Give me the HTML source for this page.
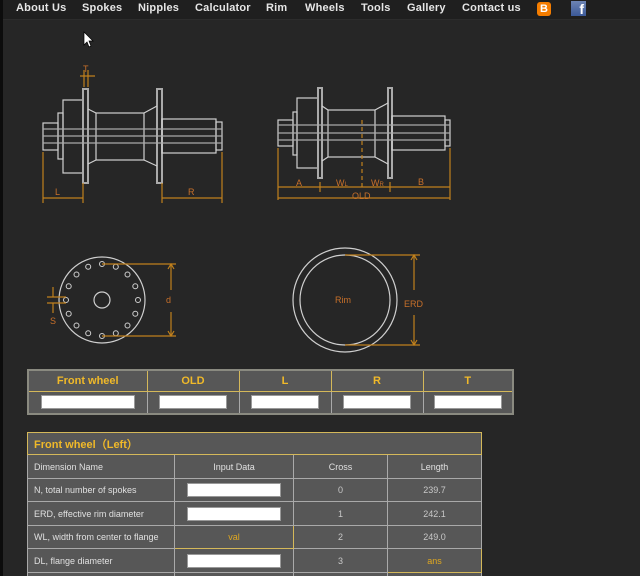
<!DOCTYPE html>
<html><head><meta charset="utf-8"><style>
*{margin:0;padding:0;box-sizing:border-box}
html,body{width:640px;height:576px;overflow:hidden}
body{background:#262626;position:relative;font-family:"Liberation Sans",sans-serif}
#nav{position:absolute;left:0;top:0;width:640px;height:20px;background:#1f1f1f;border-bottom:1px solid #2c2c2c}
#nav span{position:absolute;top:2px;font-size:11px;font-weight:bold;color:#e6e6e6;letter-spacing:0.2px}
#lstrip{position:absolute;left:0;top:0;width:3px;height:576px;background:#0c0c0c}
.t{position:absolute;border-collapse:collapse;background:#575757}
.t td{border:1px solid #a9a9a9;text-align:center;color:#c8c8c8;font-size:9px;padding:0}
.inp{display:inline-block;background:#fff;border:1px solid #999;height:14px;vertical-align:middle}
.t td.gold{color:#f0b929;font-weight:bold;font-size:11px;border-color:#d4b85a}
.t td.lab{text-align:left;padding-left:6px;color:#e0e0e0}
.t td.hd{color:#e0e0e0}
.t td.ya{color:#e0a820;border-color:#d4b85a}
</style></head><body>
<div id="nav">
<span style="left:16px">About Us</span>
<span style="left:82px">Spokes</span>
<span style="left:138px">Nipples</span>
<span style="left:195px">Calculator</span>
<span style="left:266px">Rim</span>
<span style="left:305px">Wheels</span>
<span style="left:361px">Tools</span>
<span style="left:407px">Gallery</span>
<span style="left:462px">Contact us</span>
<div style="position:absolute;left:537px;top:2px;width:14px;height:14px;background:#f57d00;border-radius:3px;color:#fff;font-size:11px;font-weight:bold;text-align:center;line-height:14px">B</div>
<div style="position:absolute;left:571px;top:1px;width:15px;height:15px;background:linear-gradient(#6d84b4,#3b5998);color:#fff;font-size:14px;font-weight:bold;text-align:right;padding-right:2px;line-height:17px">f</div>
</div>
<div id="lstrip"></div>
<svg style="position:absolute;left:0;top:0" width="640" height="576">
<path d="M84 32 L84 45 L87 42 L89 47 L91 46 L89 41 L93 41 Z" fill="#fff" stroke="#000" stroke-width="0.7"/>
<g fill="none" stroke="#cfcfcf" stroke-width="1.2">
<rect x="43" y="123" width="15" height="27"/>
<rect x="58" y="113" width="5" height="46"/>
<rect x="63" y="100" width="20" height="73"/>
<rect x="83" y="89" width="5" height="94" stroke="#aaa" stroke-width="2"/>
<rect x="157" y="89" width="5" height="94" stroke="#aaa" stroke-width="2"/>
<rect x="96" y="113" width="48" height="47"/>
<path d="M88 109 L96 113 M88 164 L96 160 M144 113 L157 106 M144 160 L157 166"/>
<rect x="162" y="119" width="54" height="34"/>
<rect x="216" y="122" width="6" height="28"/>
<path d="M43 129 H222 M43 136 H222 M43 143 H222" stroke="#aaa"/>
<rect x="278" y="120" width="15" height="26"/>
<rect x="293" y="112" width="4" height="43"/>
<rect x="297" y="98" width="21" height="70"/>
<rect x="318" y="88" width="4" height="90" stroke="#aaa" stroke-width="2"/>
<rect x="388" y="88" width="4" height="90" stroke="#aaa" stroke-width="2"/>
<rect x="328" y="110" width="47" height="47"/>
<path d="M322 106 L328 110 M322 161 L328 157 M375 110 L388 103 M375 157 L388 164"/>
<rect x="392" y="116" width="53" height="34"/>
<rect x="445" y="120" width="5" height="26"/>
<path d="M278 125 H450 M278 133 H450 M278 140 H450" stroke="#aaa"/>
<circle cx="102" cy="300" r="43"/>
<circle cx="102" cy="300" r="8"/>
<g transform="translate(102,300)" stroke-width="1">
<circle cx="0" cy="-36" r="2.5"/><circle cx="13.8" cy="-33.3" r="2.5"/><circle cx="25.5" cy="-25.5" r="2.5"/><circle cx="33.3" cy="-13.8" r="2.5"/><circle cx="36" cy="0" r="2.5"/><circle cx="33.3" cy="13.8" r="2.5"/><circle cx="25.5" cy="25.5" r="2.5"/><circle cx="13.8" cy="33.3" r="2.5"/><circle cx="0" cy="36" r="2.5"/><circle cx="-13.8" cy="33.3" r="2.5"/><circle cx="-25.5" cy="25.5" r="2.5"/><circle cx="-33.3" cy="13.8" r="2.5"/><circle cx="-36" cy="0" r="2.5"/><circle cx="-33.3" cy="-13.8" r="2.5"/><circle cx="-25.5" cy="-25.5" r="2.5"/><circle cx="-13.8" cy="-33.3" r="2.5"/>
</g>
<circle cx="345" cy="300" r="52"/>
<circle cx="345" cy="300" r="45"/>
</g>
<g fill="none" stroke="#c0801c" stroke-width="1.2">
<path d="M43 152 V203 M83 183 V203 M43 198 H83 M162 183 V203 M222 152 V203 M162 198 H222"/>
<path d="M84 70 V87 M88 70 V87 M80 76 H95"/>
<path d="M278 148 V200 M450 148 V200 M278 187 H450 M320 182 V192 M390 182 V192 M278 198 H450"/>
<path d="M362 120 V188" stroke-dasharray="4,3"/>
<path d="M102 264 H176 M102 336 H176 M171 264 V290 M171 312 V336 M168 269 L171 264 L174 269 M168 331 L171 336 L174 331"/>
<path d="M47 297 H66 M47 303 H66 M53 287 V297 M53 303 V313"/>
<path d="M345 255 H420 M345 345 H420 M414 255 V290 M414 315 V345 M411 260 L414 255 L417 260 M411 340 L414 345 L417 340"/>
</g>
<g fill="#c8702a" font-family="Liberation Sans,sans-serif" font-size="9">
<text x="83" y="72">T</text>
<text x="55" y="195">L</text>
<text x="188" y="195">R</text>
<text x="296" y="186">A</text>
<text x="336" y="186">W<tspan font-size="6">L</tspan></text>
<text x="371" y="186">W<tspan font-size="6">R</tspan></text>
<text x="418" y="185">B</text>
<text x="352" y="199">OLD</text>
<text x="166" y="303">d</text>
<text x="50" y="324">S</text>
<text x="335" y="303">Rim</text>
<text x="404" y="307">ERD</text>
</g>
</svg>
<table class="t" style="left:27px;top:369px;width:487px;height:46px;border:2px solid #8a8a80">
<tr style="height:21px"><td class="gold" style="width:119px">Front wheel</td><td class="gold" style="width:92px">OLD</td><td class="gold" style="width:92px">L</td><td class="gold" style="width:92px">R</td><td class="gold">T</td></tr>
<tr><td><span class="inp" style="width:94px"></span></td><td><span class="inp" style="width:68px"></span></td><td><span class="inp" style="width:68px"></span></td><td><span class="inp" style="width:68px"></span></td><td><span class="inp" style="width:68px"></span></td></tr>
</table>
<table class="t" style="left:27px;top:432px;width:455px;border:1px solid #d4b85a">
<tr style="height:22px"><td colspan="4" class="gold" style="text-align:left;padding-left:6px">Front wheel（Left）</td></tr>
<tr style="height:24px"><td class="lab" style="width:147px">Dimension Name</td><td class="hd" style="width:119px">Input Data</td><td class="hd" style="width:94px">Cross</td><td class="hd">Length</td></tr>
<tr style="height:23px"><td class="lab">N, total number of spokes</td><td><span class="inp" style="width:94px"></span></td><td>0</td><td>239.7</td></tr>
<tr style="height:24px"><td class="lab">ERD, effective rim diameter</td><td><span class="inp" style="width:94px"></span></td><td>1</td><td>242.1</td></tr>
<tr style="height:23px"><td class="lab">WL, width from center to flange</td><td class="ya">val</td><td>2</td><td>249.0</td></tr>
<tr style="height:24px"><td class="lab">DL, flange diameter</td><td><span class="inp" style="width:94px"></span></td><td>3</td><td class="ya">ans</td></tr>
<tr style="height:23px"><td></td><td></td><td></td><td></td></tr>
</table>
</body></html>
